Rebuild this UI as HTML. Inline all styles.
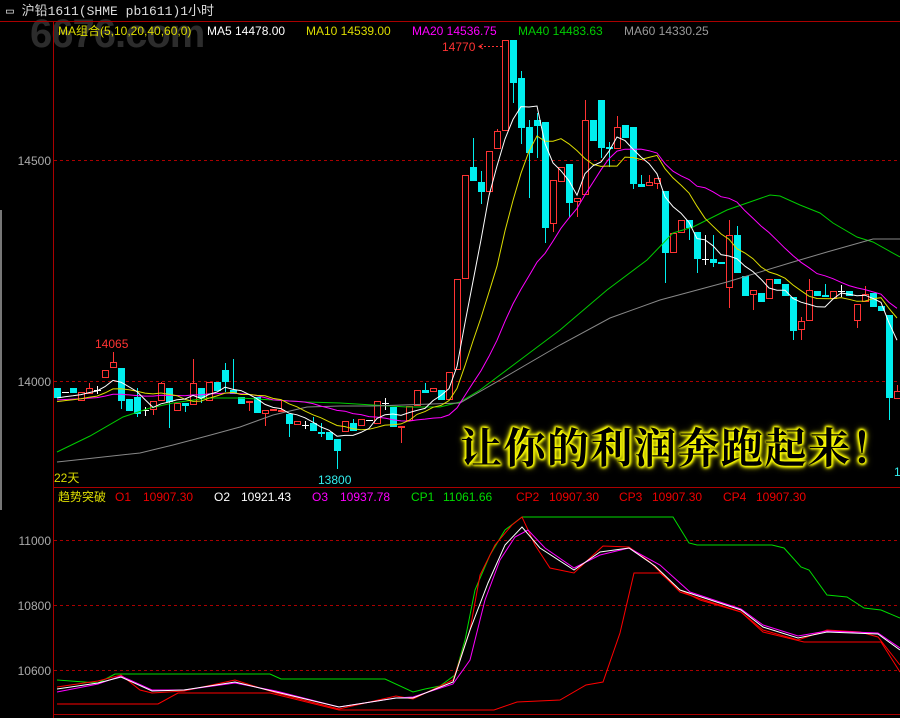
<!DOCTYPE html>
<html><head><meta charset="utf-8">
<style>
html,body{margin:0;padding:0;background:#000;}
#w{position:relative;width:900px;height:718px;overflow:hidden;background:#000;font-family:"Liberation Sans","Noto Sans CJK SC",sans-serif;}
svg{position:absolute;left:0;top:0;}
.big{position:absolute;left:460px;top:416px;font-family:"Noto Serif CJK SC","WenQuanYi Zen Hei",serif;font-size:42px;font-weight:700;color:#000;letter-spacing:1.5px;white-space:nowrap;
text-shadow:0 0 2px #ff0,0 0 3px #ff0,0 0 4px #ff0,0 0 6px #ee0,0 0 8px #cc0,1px 1px 2px #ff0,-1px -1px 2px #ff0;}
.wm{position:absolute;left:30px;top:12px;font-family:"Liberation Sans",sans-serif;font-weight:bold;font-size:40px;color:rgba(110,110,110,0.4);letter-spacing:-1px;}
</style></head><body><div id="w">
<div class="wm">6676.com</div>
<svg id="s" width="900" height="718" xmlns="http://www.w3.org/2000/svg" font-family="Liberation Sans, Noto Sans CJK SC, sans-serif">
<rect x="0" y="210" width="2" height="300" fill="#777"/>
<line x1="0" y1="21.5" x2="900" y2="21.5" stroke="#a00" />
<line x1="53.5" y1="21" x2="53.5" y2="718" stroke="#a00"/>
<line x1="53" y1="487.5" x2="900" y2="487.5" stroke="#a00"/>
<line x1="53" y1="714.5" x2="900" y2="714.5" stroke="#a00"/>
<g stroke="#a00" stroke-dasharray="3,3">
<line x1="54" y1="160.5" x2="900" y2="160.5"/><line x1="54" y1="381.5" x2="900" y2="381.5"/>
<line x1="54" y1="540.5" x2="900" y2="540.5"/><line x1="54" y1="605.5" x2="900" y2="605.5"/><line x1="54" y1="670.5" x2="900" y2="670.5"/>
</g>
<g font-size="12" fill="#aaa" text-anchor="end">
<text x="51" y="165">14500</text><text x="51" y="386">14000</text>
<text x="51" y="545">11000</text><text x="51" y="610">10800</text><text x="51" y="675">10600</text>
</g>
<g font-size="12">
<text x="6" y="15" fill="#ddd" font-family="Liberation Mono, Noto Sans CJK SC, monospace" font-size="13">▭ 沪铅1611(SHME pb1611)1小时</text>
<text x="58" y="35" fill="#dd0">MA组合(5,10,20,40,60,0)</text>
<text x="207" y="35" fill="#fff">MA5 14478.00</text>
<text x="306" y="35" fill="#dd0">MA10 14539.00</text>
<text x="412" y="35" fill="#f0f">MA20 14536.75</text>
<text x="518" y="35" fill="#0c0">MA40 14483.63</text>
<text x="624" y="35" fill="#999">MA60 14330.25</text>
<text x="442" y="51" fill="#f33">14770</text>
<text x="95" y="348" fill="#f33">14065</text>
<text x="318" y="484" fill="#3ee">13800</text>
<text x="54" y="482" fill="#dd0">22天</text>
<text x="894" y="476" fill="#3ee">1</text>
<text x="58" y="501" fill="#dd0">趋势突破</text>
<text x="115" y="501" fill="#e00">O1</text><text x="143" y="501" fill="#e00">10907.30</text>
<text x="214" y="501" fill="#fff">O2</text><text x="241" y="501" fill="#fff">10921.43</text>
<text x="312" y="501" fill="#f0f">O3</text><text x="340" y="501" fill="#f0f">10937.78</text>
<text x="411" y="501" fill="#0d0">CP1</text><text x="443" y="501" fill="#0d0">11061.66</text>
<text x="516" y="501" fill="#e00">CP2</text><text x="549" y="501" fill="#e00">10907.30</text>
<text x="619" y="501" fill="#e00">CP3</text><text x="652" y="501" fill="#e00">10907.30</text>
<text x="723" y="501" fill="#e00">CP4</text><text x="756" y="501" fill="#e00">10907.30</text>
</g>
<line x1="480" y1="46.5" x2="502" y2="46.5" stroke="#f33" stroke-dasharray="2,2"/>
<path d="M483 44 L479 46.5 L483 49" stroke="#f33" fill="none"/>
<g id="c"></g>
<g fill="none" stroke-width="1">
<polyline stroke="#0c0" points="57,452 90,436 123,417 150,408 173,403 207,398 240,398 273,400 307,402 340,403 373,405 407,407 440,407 460,402 480,390 520,360 560,330 607,290 647,260 673,233 693,227 727,210 747,203 770,195 780,196 800,205 820,213 833,223 857,237 873,242 900,257"/>
<polyline stroke="#888" points="57,462 85,459 140,453 173,445 207,436 240,427 273,415 307,407 340,406 373,406 460,403 500,380 560,345 610,318 660,300 727,282 793,262 827,252 873,239 900,239"/>
</g>
<g id="m"></g>
<g fill="none" stroke-width="1">
<polyline stroke="#0d0" points="57,680 98,683 115,674 270,674 281,679 385,679 413,692 425,689 440,686 455,675 465,640 475,590 490,555 505,530 522,517 673,517 689,543 697,545 772,545 784,548 801,567 809,570 827,595 847,597 864,608 881,610 900,618"/>
<polyline stroke="#f00" points="57,704 158,704 178,693 270,693 339,710 494,710 517,702 560,700 586,685 603,682 620,633 634,573 660,573 680,590 700,600 741,612 763,632 804,642 881,642 900,672"/>
<polyline stroke="#f00" points="57,687 98,681 121,675 140,690 152,693 184,691 235,680 276,693 339,709 396,696 413,699 453,680 470,630 480,575 495,545 512,525 522,517 535,545 550,568 574,573 590,558 603,546 629,547 650,562 680,592 741,612 763,630 798,640 827,630 860,632 878,637 900,665"/>
<polyline stroke="#f0f" points="57,692 98,684 121,676 152,690 184,690 235,683 276,691 339,707 396,698 413,697 453,684 470,660 485,600 500,560 515,537 528,530 545,548 574,568 600,555 629,548 660,565 690,592 741,609 763,625 798,636 827,631 878,633 900,648"/>
<polyline stroke="#fff" points="57,689 98,683 121,677 152,691 184,690 235,682 276,692 339,707 396,698 413,698 453,682 470,630 488,583 505,545 522,527 540,548 574,570 600,552 629,548 655,566 680,590 741,610 763,627 798,638 827,632 878,634 900,650"/>
</g>
</svg>
<div class="big">让你的利润奔跑起来！</div>
</div>
<script>
var D=[[388,398,0,0],[392,392,0,0],[388,393,0,0],[401,392,0,0],[394,388,383,0],[390,390,386,394],[378,370,0,0],[368,362,352,0],[368,401,0,409],[399,411,0,0],[397,414,388,417],[410,410,407,416],[410,401,0,415],[401,383,382,0],[388,402,0,428],[411,403,0,0],[403,406,0,412],[405,383,359,0],[388,398,0,403],[401,382,0,0],[382,391,0,0],[370,382,363,392],[390,394,359,0],[397,404,0,0],[403,401,0,411],[397,413,0,0],[414,410,0,426],[411,409,0,0],[412,410,401,0],[414,424,0,437],[425,421,0,0],[425,425,421,429],[423,431,417,0],[432,434,423,437],[432,440,0,0],[439,451,0,469],[432,421,0,0],[423,431,419,0],[426,419,0,0],[420,420,0,0],[424,401,0,0],[403,403,398,410],[407,427,0,0],[427,426,0,443],[421,406,0,0],[406,390,0,0],[390,393,383,0],[392,388,0,0],[390,400,0,0],[400,372,0,0],[370,279,0,0],[279,175,0,0],[167,181,138,0],[182,192,171,204],[192,151,0,0],[149,131,129,0],[131,40,0,0],[40,83,0,103],[78,128,71,144],[127,153,120,198],[120,126,113,158],[122,228,0,243],[224,180,0,232],[182,167,0,0],[164,203,0,217],[202,198,0,217],[195,120,100,0],[120,141,0,0],[100,148,0,158],[147,149,142,167],[149,127,116,0],[125,138,0,0],[127,184,0,189],[184,187,175,0],[186,182,175,0],[184,178,0,189],[191,253,0,283],[253,233,0,0],[233,220,0,0],[220,228,0,240],[232,259,0,273],[259,259,235,265],[259,263,235,267],[262,264,0,0],[288,235,220,308],[235,273,226,0],[276,296,0,0],[295,290,0,310],[293,302,0,0],[299,279,0,0],[279,284,0,0],[284,296,0,0],[297,331,0,340],[330,321,317,340],[321,290,279,0],[291,296,0,0],[295,297,284,0],[299,291,0,0],[291,291,285,297],[291,296,0,0],[321,304,0,328],[302,294,286,0],[293,307,0,0],[306,311,0,0],[315,398,0,420],[399,391,385,0]];
var g=document.getElementById("c"),h="";
var cl=[];
D.forEach(function(d,i){var x=57+8*i,o=d[0],c=d[1],t=Math.min(o,c),b=Math.max(o,c);var hi=d[2]||t,lo=d[3]||b;cl.push(c);
var up=c<o,flat=Math.abs(c-o)<1;var col=flat?"#fff":(up?"#f33":"#0ee");
if(hi<t||lo>b)h+='<line x1="'+(x+.5)+'" y1="'+hi+'" x2="'+(x+.5)+'" y2="'+lo+'" stroke="'+col+'"/>';
if(flat)h+='<line x1="'+(x-3)+'" y1="'+(t+.5)+'" x2="'+(x+4)+'" y2="'+(t+.5)+'" stroke="#fff"/>';
else if(up)h+='<rect x="'+(x-2.5)+'" y="'+(t+.5)+'" width="6" height="'+Math.max(b-t-1,1)+'" fill="#000" stroke="#f33"/>';
else h+='<rect x="'+(x-3)+'" y="'+t+'" width="7" height="'+(b-t)+'" fill="#0ee"/>';});
g.innerHTML=h;
function ma(n,col,pad){var p=[];for(var i=0;i<cl.length;i++){var s=0;for(var k=i-n+1;k<=i;k++)s+=k<0?pad:cl[k];p.push((57+8*i)+","+(s/n).toFixed(1));}return '<polyline fill="none" stroke="'+col+'" points="'+p.join(" ")+'"/>';}
document.getElementById("m").innerHTML=ma(20,"#f0f",400)+ma(10,"#dd0",402)+ma(5,"#fff",398);
</script>
</body></html>
